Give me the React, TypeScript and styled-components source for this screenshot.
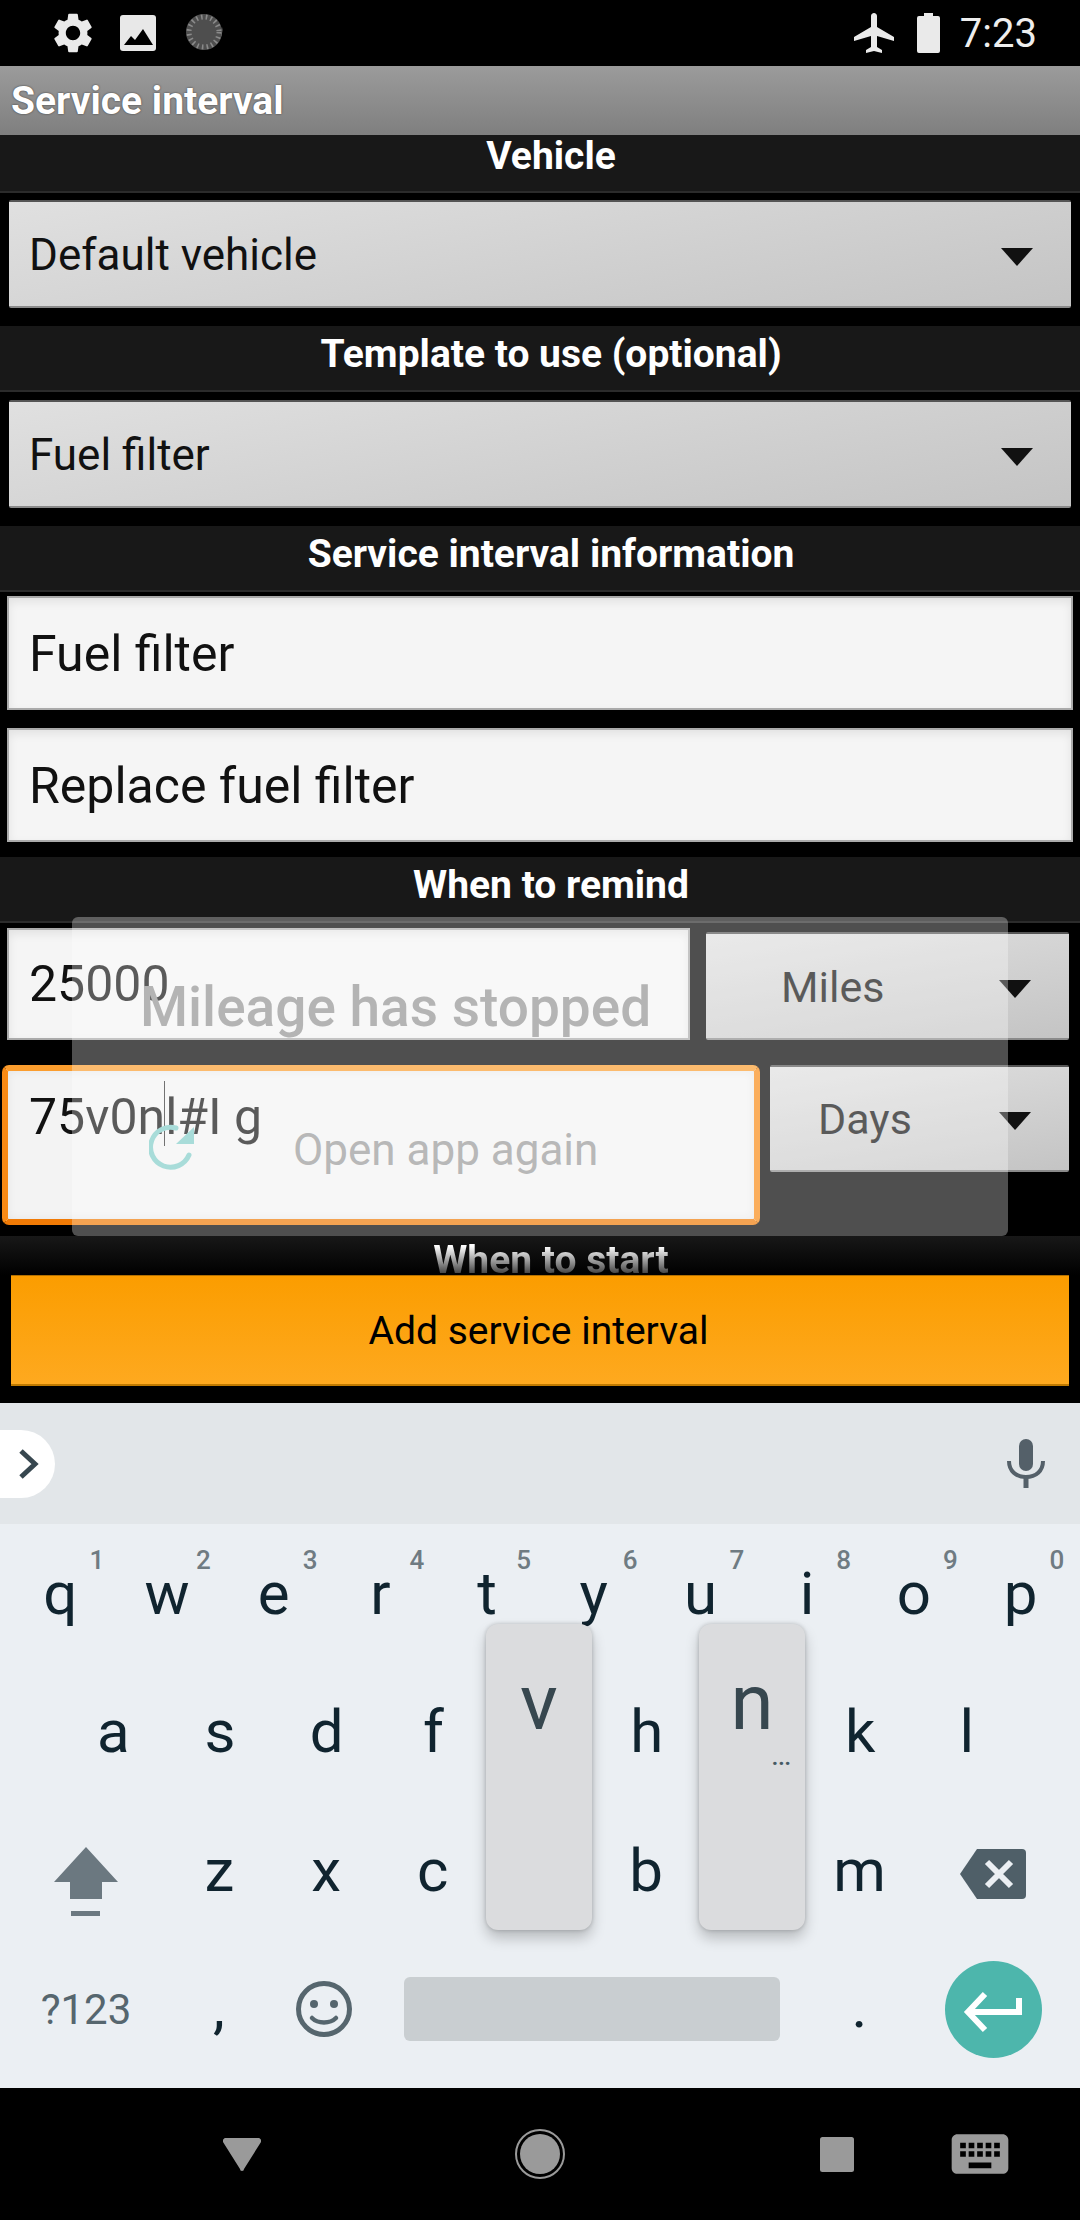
import React from "react";
import styled, { createGlobalStyle } from "styled-components";
import { MdSettings, MdAirplanemodeActive, MdKeyboard } from "react-icons/md";

const Global = createGlobalStyle`
  html, body { margin: 0; padding: 0; background: #000; }
  * { box-sizing: border-box; }
`;
const Page = styled.div`
  position: relative; width: 1080px; height: 2220px; overflow: hidden; background: #000;
  font-family: Roboto, "Liberation Sans", sans-serif; display: flex; flex-direction: column;
`;
const StatusBar = styled.div`
  height: 66px; flex: none; display: flex; align-items: center; padding: 0 43px 0 49px; color: #eee;
`;
const Slot = styled.div<{ $ml?: number }>`display: flex; flex: none; margin-left: ${p => p.$ml ?? 0}px;`;
const Spacer = styled.div`flex: 1;`;
const Clock = styled.span`font-size: 40px; margin-left: 20px; color: #eee;`;
const TitleBar = styled.div`
  position: relative; height: 69px; flex: none; background: linear-gradient(#9b9b9b, #7f7f7f); color: #fff; font-weight: 700; font-size: 39px;
  padding-left: 11px; display: flex; align-items: center; text-shadow: 0 0 2px #333; box-shadow: 0 3px 4px rgba(0,0,0,.6);
`;
const Form = styled.div`height: 1268px; flex: none; display: flex; flex-direction: column; position: relative;`;
const Header = styled.div<{ $h: number; $mt?: number; $lh?: number }>`
  height: ${p => p.$h}px; margin-top: ${p => p.$mt ?? 0}px; background: #181818; border-bottom: 2px solid #2b2b2b;
  color: #fff; font-weight: 700; font-size: 39px; text-align: center; line-height: ${p => p.$lh ?? 57}px; flex: none; padding-left: 22px;
`;
const SpinnerBox = styled.div<{ $w?: number; $h: number; $mt: number; $ml?: number; $pl?: number; $fs?: number }>`
  flex: none; width: ${p => (p.$w ? p.$w + "px" : "auto")}; height: ${p => p.$h}px; margin: ${p => p.$mt}px 0 0 ${p => p.$ml ?? 0}px;
  background: linear-gradient(170deg, #e0e0e0, #c4c4c4); border-bottom: 2px solid #8a8a8a; border-top: 2px solid #555;
  display: flex; align-items: center; justify-content: space-between; padding: 1px 38px 0 ${p => p.$pl ?? 20}px;
  color: #111; font-size: ${p => p.$fs ?? 44}px; border-radius: 2px;
`;
const FullSpinner = styled(SpinnerBox)`margin-left: 9px; margin-right: 9px;`;
const Caret = styled.div`
  width: 0; height: 0; border-left: 16px solid transparent; border-right: 16px solid transparent; border-top: 18px solid #111; margin-top: 4px;
`;
const Input = styled.div<{ $h: number; $mt: number }>`
  flex: none; height: ${p => p.$h}px; margin: ${p => p.$mt}px 7px 0; background: #f5f5f5; box-shadow: inset 0 4px 10px rgba(0,0,0,.08);
  border: 2px solid #aaa; padding: 2px 0 0 20px; display: flex; align-items: center; color: #111; font-size: 50px;
`;
const Row = styled.div<{ $mt: number; $h: number }>`
  flex: none; display: flex; margin-top: ${p => p.$mt}px; height: ${p => p.$h}px; align-items: flex-start;
`;
const SmallInput = styled.div`
  width: 683px; height: 112px; margin-left: 7px; background: #f5f5f5; box-shadow: inset 0 4px 10px rgba(0,0,0,.08); border: 2px solid #aaa; color: #111; font-size: 50px;
  padding-left: 20px; display: flex; align-items: center;
`;
const FocusInput = styled.div`
  position: relative; width: 758px; height: 160px; margin-left: 2px; background: #f3f3f3;
  border: 6px solid #f98a14; border-top-color: #fb9d2e; border-bottom-color: #f07a05; border-radius: 7px;
  box-shadow: inset 0 0 10px rgba(0,0,0,.06);
  color: #111; font-size: 50px; padding: 18px 0 0 21px; line-height: 56px;
`;
const TextCursor = styled.span`
  position: absolute; left: 156px; top: 10px; width: 1px; height: 65px; background: #333;
`;
const FadeHeader = styled.div`
  height: 39px; flex: none; background: linear-gradient(#181818, #000); font-weight: 700; font-size: 39px;
  text-align: center; line-height: 48px; overflow: hidden; padding-left: 22px;
`;
const FadeText = styled.span`
  background: linear-gradient(#fff 20%, #222 90%); -webkit-background-clip: text; background-clip: text; color: transparent;
`;
const AddButton = styled.div`
  flex: none; height: 111px; margin: 0 11px; background: linear-gradient(#fb9d00, #fea91f);
  border-top: 1px solid #b37000; border-bottom: 2px solid #c07a00;
  color: #000; font-size: 39px; display: flex; align-items: center; justify-content: center; padding: 2px 3px 0 0;
`;
const Toast = styled.div`
  position: absolute; left: 72px; top: 917px; width: 936px; height: 319px; background: rgba(255,255,255,.31); border-radius: 6px;
`;
const ToastTitle = styled.div`
  position: absolute; left: 68px; top: 58px; font-size: 55px; font-weight: 500; color: #b4b4b4; white-space: nowrap;
`;
const ToastLine = styled.div`
  position: absolute; left: 221px; top: 207px; font-size: 44px; color: #b8b8b8; white-space: nowrap;
`;
const ToastIcon = styled.div`position: absolute; left: 77px; top: 207px; display: flex;`;
const Suggest = styled.div`
  height: 121px; background: #e2e6e9; display: flex; align-items: center; justify-content: space-between; flex: none;
  padding-right: 35px;
`;
const Expand = styled.div`
  width: 55px; height: 68px; background: #fff; border-radius: 0 34px 34px 0; display: flex; align-items: center; padding-left: 18px;
`;
const Keys = styled.div`
  position: relative; height: 564px; background: #ebeff3; display: flex; flex-direction: column; flex: none;
`;
const KeyRow = styled.div<{ $pl: number; $h: number }>`
  height: ${p => p.$h}px; padding-left: ${p => p.$pl}px; display: flex; flex: none;
`;
const Key = styled.div`
  position: relative; width: 106.7px; height: 100%; display: flex; align-items: center; justify-content: center; font-size: 60px; color: #10242f; flex: none;
`;
const Hint = styled.span`
  position: absolute; right: 9.5px; top: 21px; font-size: 26px; font-weight: 500; color: #6f7b82;
`;
const Popup = styled.div<{ $left: number }>`
  position: absolute; left: ${p => p.$left}px; top: 100px; width: 106px; height: 306px; background: #dbdcde; border-radius: 12px;
  box-shadow: 0 8px 14px rgba(0,0,0,.22), 0 0 4px rgba(0,0,0,.2); color: #37474f; font-size: 78px; text-align: center; line-height: 80px; padding-top: 39px;
`;
const Dots = styled.span`
  position: absolute; right: 14px; top: 124px; font-size: 22px; line-height: 20px; font-weight: 700; color: #455a64;
`;
const ShiftCell = styled.div`
  width: 166px; padding-left: 5px; flex: none; display: flex; justify-content: center; align-items: center; padding-top: 24px;
`;
const BackCell = styled.div`
  width: 160px; flex: none; display: flex; justify-content: center; align-items: center; padding-top: 8px;
`;
const BottomRow = styled.div`
  height: 130px; margin-top: 4px; display: flex; align-items: center; flex: none;
`;
const Sym = styled.div`
  width: 172px; flex: none; text-align: center; font-size: 42px; color: #56666e;
`;
const Cell = styled.div<{ $w: number; $pb?: number }>`
  width: ${p => p.$w}px; flex: none; display: flex; justify-content: center; align-items: center; font-size: 60px; color: #10242f;
  padding-bottom: ${p => p.$pb ?? 0}px;
`;
const Space = styled.div`
  width: 376px; height: 64px; flex: none; background: #c9ced1; border-radius: 6px; margin-left: 22px;
`;
const Enter = styled.div`
  width: 97px; height: 97px; flex: none; margin-left: 6px; border-radius: 50%; background: #4db6ac; display: flex; align-items: center; justify-content: center;
`;
const Nav = styled.div`
  flex: 1; display: flex; align-items: center; background: #000; padding-left: 223px; color: #9a9a9a;
`;

const row1: [string, string][] = [["q","1"],["w","2"],["e","3"],["r","4"],["t","5"],["y","6"],["u","7"],["i","8"],["o","9"],["p","0"]];
const row2 = ["a","s","d","f","","h","","k","l"];
const row3 = ["z","x","c","","b","","m"];

export default function App() {
  return (
    <Page>
      <Global />
      <StatusBar>
        <Slot><MdSettings size={48} color="#eaeaea" /></Slot>
        <Slot $ml={23}>
          <svg width="36" height="36" viewBox="0 0 36 36"><rect width="36" height="36" rx="3" fill="#e8e8e8"/><path d="M4 30l7-9 4 4 8-11 10 16z" fill="#000"/></svg>
        </Slot>
        <Slot $ml={29}>
          <svg width="40" height="40" viewBox="0 0 40 40">
            <path d="M5 28A18 18 0 0 0 37 14 A19.5 19.5 0 0 1 5 28z" fill="#ddd"/>
            <circle cx="19" cy="19" r="18" fill="#4e4e4e"/>
            <circle cx="19" cy="19" r="15" fill="none" stroke="#8a8a8a" strokeWidth="5" strokeDasharray="1.6 3.2"/>
          </svg>
        </Slot>
        <Spacer />
        <Slot><MdAirplanemodeActive size={48} color="#eaeaea" /></Slot>
        <Slot $ml={19}>
          <svg width="23" height="40" viewBox="0 0 23 40"><path d="M7 0h9v3h5a2 2 0 0 1 2 2v33a2 2 0 0 1-2 2H2a2 2 0 0 1-2-2V5a2 2 0 0 1 2-2h5z" fill="#eaeaea"/></svg>
        </Slot>
        <Clock>7:23</Clock>
      </StatusBar>
      <TitleBar>Service interval</TitleBar>
      <Form>
        <Header $h={58} $lh={43}>Vehicle</Header>
        <FullSpinner $h={108} $mt={7}>Default vehicle<Caret /></FullSpinner>
        <Header $h={66} $mt={18}>Template to use (optional)</Header>
        <FullSpinner $h={108} $mt={8}>Fuel filter<Caret /></FullSpinner>
        <Header $h={66} $mt={18}>Service interval information</Header>
        <Input $h={114} $mt={4}>Fuel filter</Input>
        <Input $h={114} $mt={18}>Replace fuel filter</Input>
        <Header $h={66} $mt={15}>When to remind</Header>
        <Row $mt={5} $h={137}>
          <SmallInput>25000</SmallInput>
          <SpinnerBox $w={363} $h={108} $mt={4} $ml={16} $pl={75} $fs={43}>Miles<Caret /></SpinnerBox>
        </Row>
        <Row $mt={0} $h={171}>
          <FocusInput>75v0nl#I g<TextCursor /></FocusInput>
          <SpinnerBox $w={299} $h={107} $mt={0} $ml={10} $pl={48} $fs={43}>Days<Caret /></SpinnerBox>
        </Row>
        <FadeHeader><FadeText>When to start</FadeText></FadeHeader>
        <AddButton>Add service interval</AddButton>
      </Form>
      <Suggest>
        <Expand>
          <svg width="22" height="32" viewBox="0 0 22 32"><path d="M3 3l14 13L3 29" fill="none" stroke="#37474f" strokeWidth="5"/></svg>
        </Expand>
        <svg width="38" height="50" viewBox="0 0 38 50"><rect x="12" width="14" height="32" rx="7" fill="#546069"/><path d="M2 22c0 10 7 16 17 16s17-6 17-16" fill="none" stroke="#546069" strokeWidth="4"/><path d="M19 36v13" stroke="#546069" strokeWidth="5"/></svg>
      </Suggest>
      <Keys>
        <KeyRow $pl={7} $h={138}>{row1.map(([k, h]) => <Key key={k}>{k}<Hint>{h}</Hint></Key>)}</KeyRow>
        <KeyRow $pl={60} $h={138}>{row2.map((k, i) => <Key key={i}>{k}</Key>)}</KeyRow>
        <KeyRow $pl={0} $h={140}>
          <ShiftCell>
            <svg width="66" height="70" viewBox="0 0 66 70"><path d="M33 0l32 35H49v17H17V35H1z" fill="#6b7880"/><rect x="18" y="64" width="29" height="5" fill="#6b7880"/></svg>
          </ShiftCell>
          {row3.map((k, i) => <Key key={i}>{k}</Key>)}
          <BackCell>
            <svg width="66" height="50" viewBox="0 0 66 50">
              <path d="M17 0h45a4 4 0 0 1 4 4v42a4 4 0 0 1-4 4H17L0 25z" fill="#4f5f68"/>
              <path d="M27 13l24 24M51 13L27 37" stroke="#ebeff3" strokeWidth="6"/>
            </svg>
          </BackCell>
        </KeyRow>
        <BottomRow>
          <Sym>?123</Sym>
          <Cell $w={94} $pb={6}>,</Cell>
          <Cell $w={116}>
            <svg width="56" height="56" viewBox="0 0 56 56">
              <circle cx="28" cy="28" r="25.5" fill="none" stroke="#56666e" strokeWidth="5"/>
              <circle cx="18" cy="23" r="4" fill="#56666e"/><circle cx="38" cy="23" r="4" fill="#56666e"/>
              <path d="M16 37c6 6 18 6 24 0" fill="none" stroke="#56666e" strokeWidth="4.5" strokeLinecap="round"/>
            </svg>
          </Cell>
          <Space />
          <Cell $w={159} $pb={6}>.</Cell>
          <Enter>
            <svg width="97" height="97" viewBox="0 0 97 97" fill="none" stroke="#fff" strokeWidth="6">
              <path d="M24 51h50V37"/><path d="M40 33L23 51l17 18"/>
            </svg>
          </Enter>
        </BottomRow>
        <Popup $left={486}>v</Popup>
        <Popup $left={699}>n<Dots>...</Dots></Popup>
      </Keys>
      <Nav>
        <Slot><svg width="38" height="33" viewBox="0 0 38 33"><path d="M3 0h32a3 3 0 0 1 3 4L21 31a2 2 0 0 1-4 0L0 4a3 3 0 0 1 3-4z" fill="#9a9a9a"/></svg></Slot>
        <Slot $ml={254}>
          <svg width="50" height="50" viewBox="0 0 50 50"><circle cx="25" cy="25" r="24" fill="none" stroke="#9a9a9a" strokeWidth="2"/><circle cx="25" cy="25" r="20" fill="#9a9a9a"/></svg>
        </Slot>
        <Slot $ml={255}>
          <svg width="34" height="35" viewBox="0 0 34 35"><rect width="34" height="35" rx="2.5" fill="#9a9a9a"/></svg>
        </Slot>
        <Slot $ml={92}><MdKeyboard size={68} color="#9a9a9a" /></Slot>
      </Nav>
      <Toast>
        <ToastTitle>Mileage has stopped</ToastTitle>
        <ToastIcon>
          <svg width="48" height="48" viewBox="0 0 48 48">
            <path d="M40 31A20 20 0 1 1 27 4" fill="none" stroke="#a8dcd9" strokeWidth="5" strokeLinecap="round"/>
            <path d="M45 3v17H27z" fill="#a8dcd9"/>
          </svg>
        </ToastIcon>
        <ToastLine>Open app again</ToastLine>
      </Toast>
    </Page>
  );
}
